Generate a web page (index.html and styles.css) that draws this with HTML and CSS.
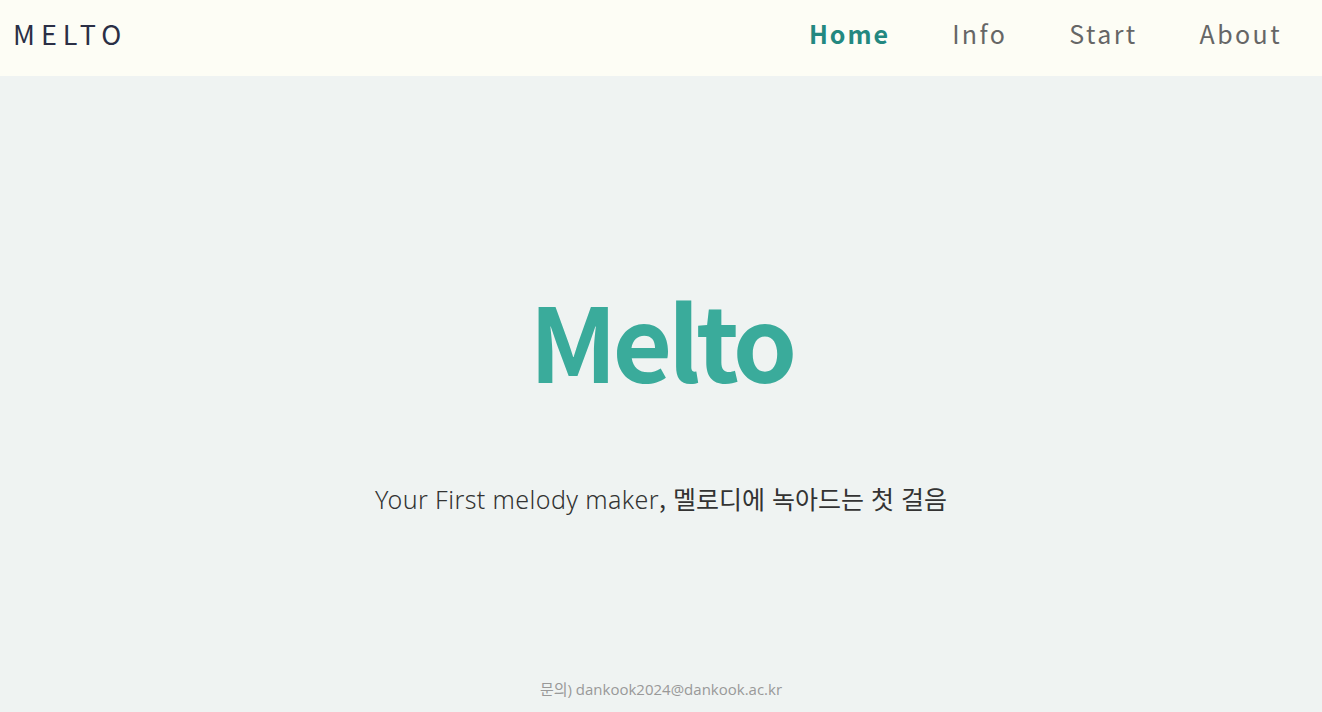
FILE: index.html
```html
<!DOCTYPE html>
<html lang="ko">
<head>
<meta charset="utf-8">
<title>Melto</title>
<link rel="stylesheet" href="styles.css">
</head>
<body>
<header class="topbar">
  <div class="logo">MELTO</div>
  <nav class="nav">
    <a class="nav-link active" href="#">Home</a>
    <a class="nav-link" href="#">Info</a>
    <a class="nav-link" href="#">Start</a>
    <a class="nav-link" href="#">About</a>
  </nav>
</header>
<main class="hero">
  <h1 class="title">Melto</h1>
  <p class="subtitle"><span class="en">Your First melody maker</span>, 멜로디에 녹아드는 첫 걸음</p>
  <footer class="footer">문의) dankook2024@dankook.ac.kr</footer>
</main>
</body>
</html>
```
FILE: styles.css
```css
html, body {
  margin: 0;
  padding: 0;
}
body {
  background: #eff3f2;
  font-family: "Noto Sans CJK KR", "Noto Sans", sans-serif;
  height: 712px;
  overflow: hidden;
}
.topbar {
  height: 76px;
  background: #fdfdf5;
  display: flex;
  align-items: center;
  justify-content: space-between;
  padding: 0 40px 10px 13px;
  box-sizing: border-box;
}
.logo {
  font-size: 27px;
  letter-spacing: 6px;
  color: #2b2f45;
  font-weight: 400;
  line-height: 1;
}
.nav {
  display: flex;
  gap: 62px;
}
.nav-link {
  font-size: 25px;
  letter-spacing: 2.4px;
  color: #666666;
  text-decoration: none;
  line-height: 1;
}
.nav-link.active {
  color: #238880;
  font-weight: 600;
  letter-spacing: 2px;
}
.hero {
  height: 636px;
  display: flex;
  flex-direction: column;
  align-items: center;
}
.title {
  margin: 211px 0 0;
  font-size: 103px;
  font-weight: 600;
  color: #3aab9b;
  line-height: 1;
  letter-spacing: -4.5px;
}
.subtitle {
  margin: 96px 0 0;
  font-size: 25px;
  color: #333;
  line-height: 1;
}
.subtitle .en {
  font-family: "Noto Sans", sans-serif;
  font-weight: 300;
  font-size: 25px;
  letter-spacing: 0.4px;
}
.footer {
  margin-top: auto;
  margin-bottom: 13px;
  font-family: "Open Sans", "Noto Sans CJK KR", sans-serif;
  font-size: 15px;
  color: #999;
}
```
